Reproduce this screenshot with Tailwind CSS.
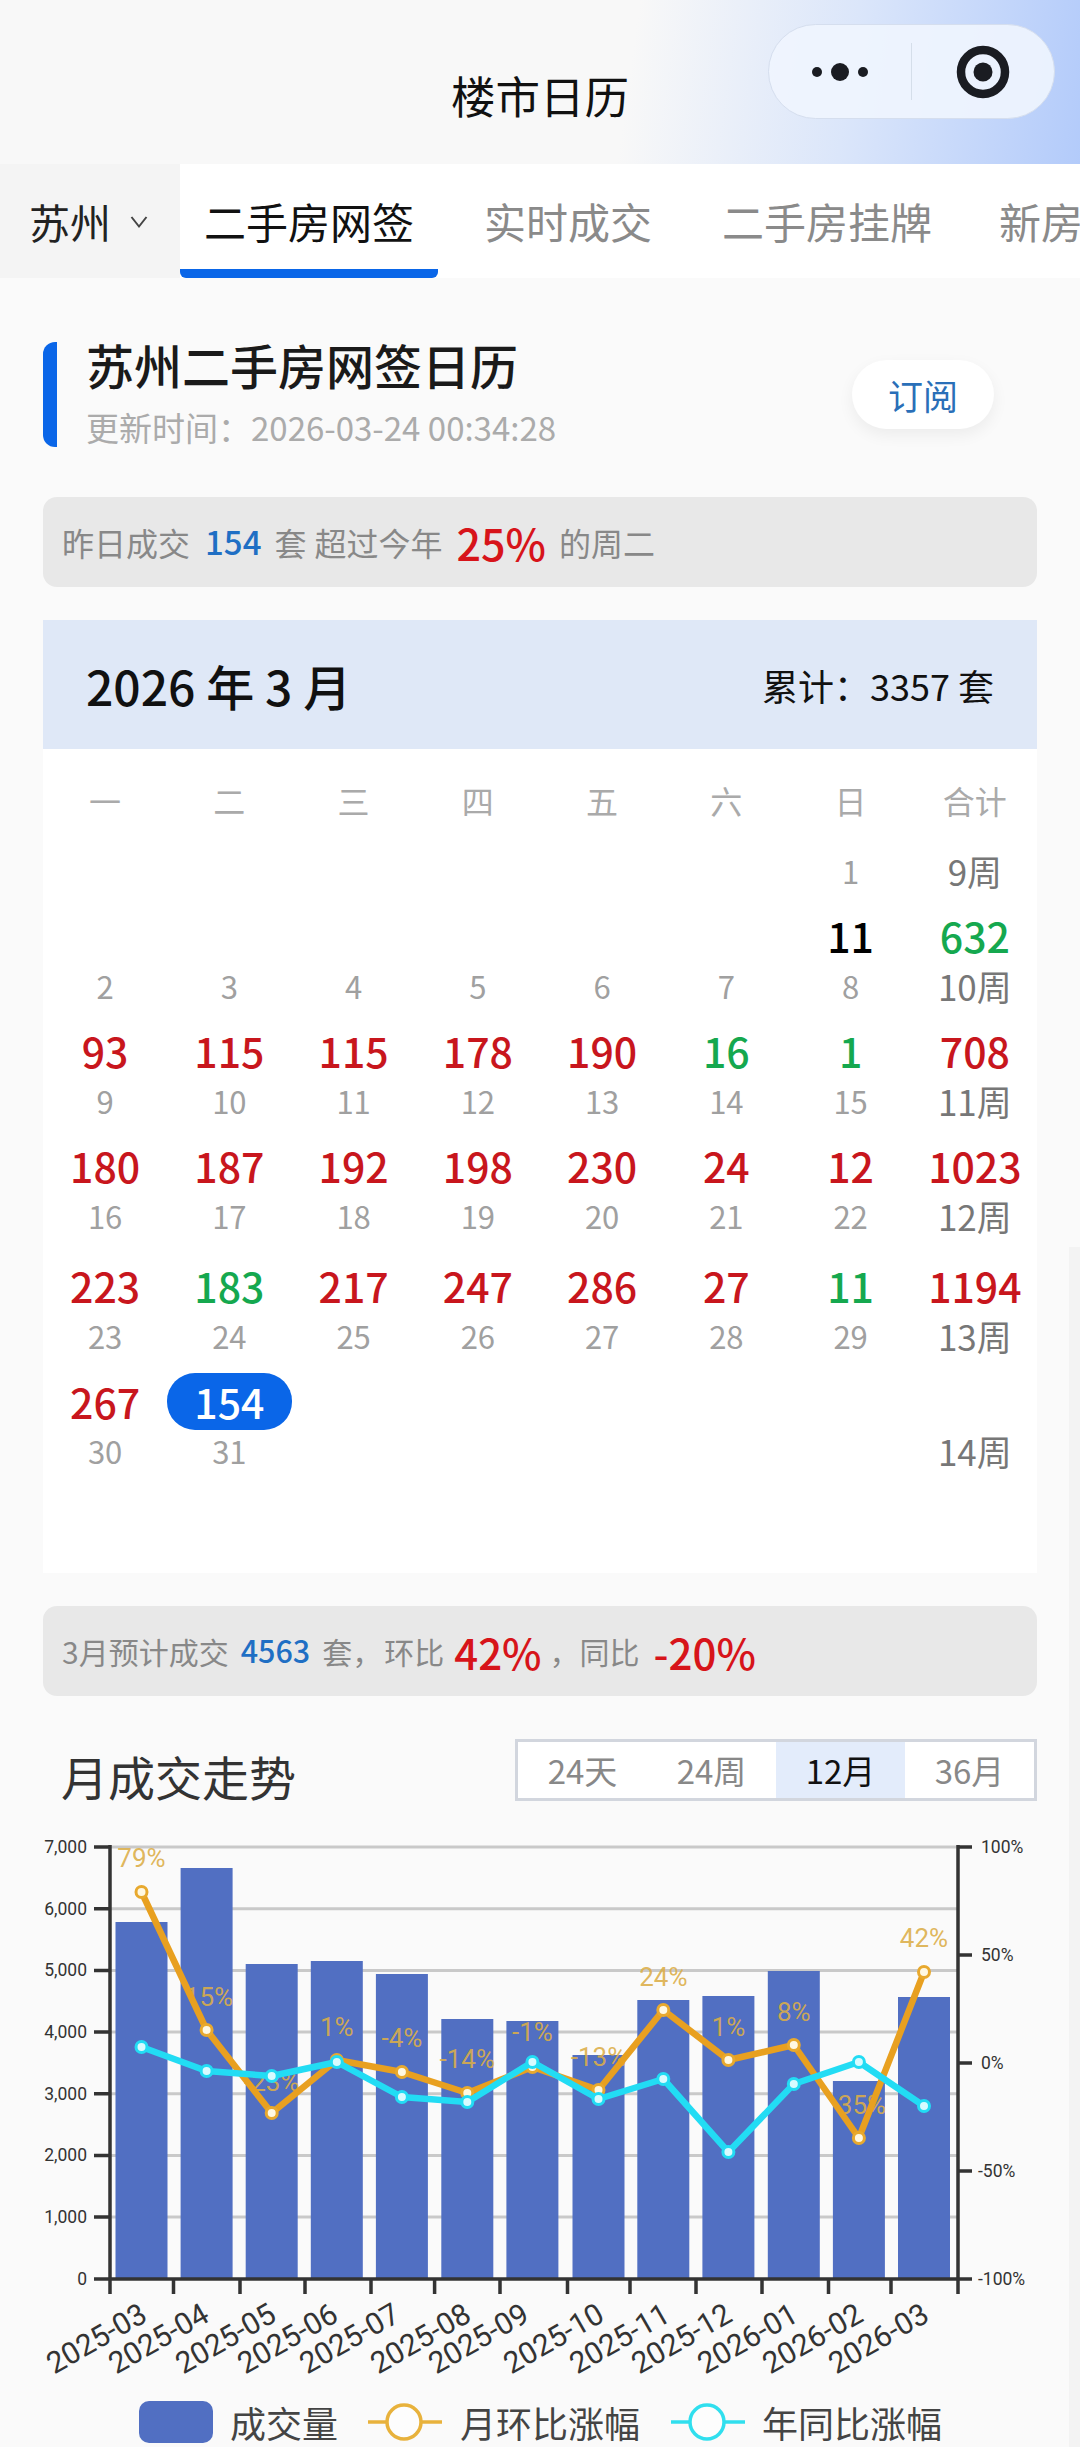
<!DOCTYPE html>
<html lang="zh">
<head>
<meta charset="utf-8">
<title>楼市日历</title>
<script src="https://cdn.jsdelivr.net/npm/@tailwindcss/browser@4"></script>
</head>
<body class="m-0">
<div class="relative w-[1080px] h-[2447px] overflow-hidden bg-[#fafafa] font-['Noto_Sans_CJK_SC','Noto_Sans',sans-serif]">
  <div class="absolute right-0 top-[1247px] bottom-0 w-[11px] bg-[#f3f3f3]"></div>

  <!-- Title bar -->
  <header class="relative h-[164px] bg-[linear-gradient(98deg,#f8f8f8_58%,#dbe6fa_78%,#b3cbfa_100%)]">
    <h1 class="absolute left-0 right-0 top-[68px] text-center text-[44.5px] leading-[54px] font-normal text-[#111]">楼市日历</h1>
    <div class="absolute left-[768px] top-[24px] w-[287px] h-[95px] rounded-full border border-[#d5deee] bg-[#eff5fe]/90 flex items-center">
      <div class="flex-1 flex justify-center">
        <svg width="70" height="24" viewBox="0 0 70 24" fill="#1a1c22"><circle cx="12" cy="12" r="5"/><circle cx="35" cy="12" r="9"/><circle cx="58" cy="12" r="5"/></svg>
      </div>
      <div class="w-px h-[57px] bg-[#d5deea]"></div>
      <div class="flex-1 flex justify-center">
        <svg width="54" height="54" viewBox="0 0 54 54"><circle cx="27" cy="27" r="22" fill="none" stroke="#1a1c22" stroke-width="8.5"/><circle cx="27" cy="27" r="9.5" fill="#1a1c22"/></svg>
      </div>
    </div>
  </header>

  <!-- Tabs -->
  <nav class="flex h-[114px] bg-white text-[42px] leading-[114px] text-[#8a8a8a] whitespace-nowrap overflow-hidden">
    <div class="w-[180px] shrink-0 bg-[#f4f4f4] flex items-center pl-[29px] text-[41px] text-[#222]">
      <span>苏州</span>
      <svg class="ml-[19px] mt-[2px]" width="18" height="14" viewBox="0 0 18 14" fill="none" stroke="#444" stroke-width="2"><path d="M1.5 2 9 11.5 16.5 2"/></svg>
    </div>
    <div class="relative w-[258px] shrink-0 text-center text-[#111]">二手房网签
      <div class="absolute left-0 right-0 bottom-0 h-[9px] rounded-b-[6px] bg-[#0a66e8]"></div>
    </div>
    <div class="ml-[46px]">实时成交</div>
    <div class="ml-[70px]">二手房挂牌</div>
    <div class="ml-[67px]">新房挂牌</div>
  </nav>

  <main class="px-[43px]">
    <!-- Section head -->
    <section class="mt-[64px] h-[105px] flex items-center">
      <div class="w-[14px] h-full rounded-l-[12px] bg-[#0a66e8]"></div>
      <div class="ml-[29px] flex-1 h-full">
        <h2 class="-mt-[2px] text-[48px] leading-[48px] font-medium text-[#1a1a1a]">苏州二手房网签日历</h2>
        <p class="mt-[20px] text-[33px] leading-[38px] text-[#ababab] whitespace-nowrap">更新时间：2026-03-24 00:34:28</p>
      </div>
      <button class="mr-[43px] w-[142px] h-[69px] rounded-full bg-white shadow-[0_6px_16px_rgba(0,0,0,0.06)] text-[35px] leading-[67px] text-[#2a6fb8]">订阅</button>
    </section>

    <!-- Yesterday banner -->
    <section class="mt-[50px] h-[90px] rounded-[14px] bg-[#e8e8e8] pl-[19px] flex items-center text-[32px] text-[#888] whitespace-nowrap">
      <span>昨日成交</span>
      <span class="ml-[15px] text-[33px] font-medium text-[#1f6fc4]">154</span>
      <span class="ml-[13px]">套</span>
      <span class="ml-[8px]">超过今年</span>
      <span class="ml-[14px] text-[43px] font-medium text-[#d7141a]">25%</span>
      <span class="ml-[13px]">的周二</span>
    </section>

    <!-- Calendar -->
    <section class="mt-[33px] h-[953px] bg-white">
      <div class="h-[129px] bg-[#dfe8f7] px-[43px] flex items-center justify-between whitespace-nowrap text-[#111]">
        <div class="text-[48px] font-medium">2026 年 3 月</div>
        <div class="text-[36px]">累计：3357 套</div>
      </div>
      <div class="mt-[26px] grid grid-cols-8 h-[50px] items-center text-center text-[32px] leading-[50px] text-[#aaaaaa]">
        <div>一</div><div>二</div><div>三</div><div>四</div><div>五</div><div>六</div><div>日</div><div>合计</div>
      </div>

      <div class="mt-[21px] grid grid-cols-8 h-[50px] items-center text-center text-[31px] leading-[50px] text-[#a0a0a0]">
        <div></div><div></div><div></div><div></div><div></div><div></div><div>1</div><div class="text-[35px] text-[#777]">9周</div>
      </div>
      <div class="mt-[14px] grid grid-cols-8 h-[50px] items-center text-center text-[41px] leading-[50px] font-medium text-[#c8161d]">
        <div></div><div></div><div></div><div></div><div></div><div></div><div class="text-black">11</div><div class="text-[#15a84f]">632</div>
      </div>

      <div class="mt-[1px] grid grid-cols-8 h-[50px] items-center text-center text-[31px] leading-[50px] text-[#a0a0a0]">
        <div>2</div><div>3</div><div>4</div><div>5</div><div>6</div><div>7</div><div>8</div><div class="text-[35px] text-[#777]">10周</div>
      </div>
      <div class="mt-[14px] grid grid-cols-8 h-[50px] items-center text-center text-[41px] leading-[50px] font-medium text-[#c8161d]">
        <div>93</div><div>115</div><div>115</div><div>178</div><div>190</div><div class="text-[#15a84f]">16</div><div class="text-[#15a84f]">1</div><div>708</div>
      </div>

      <div class="mt-[1px] grid grid-cols-8 h-[50px] items-center text-center text-[31px] leading-[50px] text-[#a0a0a0]">
        <div>9</div><div>10</div><div>11</div><div>12</div><div>13</div><div>14</div><div>15</div><div class="text-[35px] text-[#777]">11周</div>
      </div>
      <div class="mt-[14px] grid grid-cols-8 h-[50px] items-center text-center text-[41px] leading-[50px] font-medium text-[#c8161d]">
        <div>180</div><div>187</div><div>192</div><div>198</div><div>230</div><div>24</div><div>12</div><div>1023</div>
      </div>

      <div class="mt-[1px] grid grid-cols-8 h-[50px] items-center text-center text-[31px] leading-[50px] text-[#a0a0a0]">
        <div>16</div><div>17</div><div>18</div><div>19</div><div>20</div><div>21</div><div>22</div><div class="text-[35px] text-[#777]">12周</div>
      </div>
      <div class="mt-[19px] grid grid-cols-8 h-[50px] items-center text-center text-[41px] leading-[50px] font-medium text-[#c8161d]">
        <div>223</div><div class="text-[#15a84f]">183</div><div>217</div><div>247</div><div>286</div><div>27</div><div class="text-[#15a84f]">11</div><div>1194</div>
      </div>

      <div class="mt-[1px] grid grid-cols-8 h-[50px] items-center text-center text-[31px] leading-[50px] text-[#a0a0a0]">
        <div>23</div><div>24</div><div>25</div><div>26</div><div>27</div><div>28</div><div>29</div><div class="text-[35px] text-[#777]">13周</div>
      </div>
      <div class="mt-[14px] grid grid-cols-8 h-[50px] items-center text-center text-[41px] leading-[50px] font-medium text-[#c8161d]">
        <div>267</div><div class="-my-[4px] mt-[-2px] h-[57px] rounded-[28px] bg-[#0a66e8] text-white leading-[57px]">154</div><div></div><div></div><div></div><div></div><div></div><div></div>
      </div>

      <div class="mt-[1px] grid grid-cols-8 h-[50px] items-center text-center text-[31px] leading-[50px] text-[#a0a0a0]">
        <div>30</div><div>31</div><div></div><div></div><div></div><div></div><div></div><div class="text-[35px] text-[#777]">14周</div>
      </div>
    </section>

    <!-- Forecast banner -->
    <section class="mt-[33px] h-[90px] rounded-[14px] bg-[#e8e8e8] pl-[19px] flex items-center text-[30px] text-[#888] whitespace-nowrap">
      <span>3月预计成交</span>
      <span class="ml-[12px] text-[30.5px] font-medium text-[#1f6fc4]">4563</span>
      <span class="ml-[12px]">套，</span>
      <span class="ml-[2px]">环比</span>
      <span class="ml-[10px] text-[42px] font-medium text-[#d7141a]">42%</span>
      <span class="ml-[8px]">，</span>
      <span>同比</span>
      <span class="ml-[14px] text-[42px] font-medium text-[#d7141a]">-20%</span>
    </section>

    <!-- Trend head -->
    <section class="mt-[43px] h-[62px] flex justify-between">
      <h3 class="ml-[18px] mt-[11px] text-[47px] leading-[52px] font-normal text-[#333]">月成交走势</h3>
      <div class="w-[522px] h-[62px] border-[3px] border-[#d2d6de] bg-white grid grid-cols-4 text-center text-[33px] leading-[56px] text-[#888]">
        <div>24天</div><div>24周</div><div class="bg-[#e3ecfb] text-[#111]">12月</div><div>36月</div>
      </div>
    </section>
  </main>

  <!-- Chart -->
  <svg class="block mt-[19px]" width="1080" height="580" viewBox="0 1820 1080 580" font-family="Roboto, 'Noto Sans', sans-serif">
    <g stroke="#c9c9c9" stroke-width="3">
      <path d="M111 1847H958M111 1908.7H958M111 1970.4H958M111 2032H958M111 2093.8H958M111 2155.5H958M111 2217H958"/>
    </g>
    <g fill="#516fc2">
      <rect x="115.5" y="1922" width="52" height="357"/>
      <rect x="180.6" y="1868" width="52" height="411"/>
      <rect x="245.7" y="1964" width="52" height="315"/>
      <rect x="310.8" y="1961" width="52" height="318"/>
      <rect x="375.9" y="1974" width="52" height="305"/>
      <rect x="441.3" y="2019" width="52" height="260"/>
      <rect x="506.4" y="2021" width="52" height="258"/>
      <rect x="572.5" y="2055" width="52" height="224"/>
      <rect x="637.3" y="2000" width="52" height="279"/>
      <rect x="702.4" y="1996" width="52" height="283"/>
      <rect x="767.8" y="1971" width="52" height="308"/>
      <rect x="832.9" y="2081" width="52" height="198"/>
      <rect x="898" y="1997" width="52" height="282"/>
    </g>
    <g stroke="#333" stroke-width="3.5" fill="none">
      <path d="M110 1845V2294M958 1845V2294"/>
      <path d="M94 1847H110M94 1908.7H110M94 1970.4H110M94 2032H110M94 2093.8H110M94 2155.5H110M94 2217H110"/>
      <path d="M958 1847H972M958 1955H972M958 2063H972M958 2171H972"/>
      <path d="M94 2279H972"/>
      <path d="M173.5 2279V2294M240 2279V2294M305 2279V2294M371 2279V2294M434.6 2279V2294M500 2279V2294M567.5 2279V2294M630 2279V2294M696 2279V2294M762 2279V2294M828.5 2279V2294M891 2279V2294"/>
    </g>
    <g fill="#333" font-size="17.5" text-anchor="end">
      <text x="87" y="1853">7,000</text>
      <text x="87" y="1915">6,000</text>
      <text x="87" y="1976">5,000</text>
      <text x="87" y="2038">4,000</text>
      <text x="87" y="2100">3,000</text>
      <text x="87" y="2161">2,000</text>
      <text x="87" y="2223">1,000</text>
      <text x="87" y="2285">0</text>
    </g>
    <g fill="#333" font-size="17.5">
      <text x="981" y="1853">100%</text>
      <text x="981" y="1961">50%</text>
      <text x="981" y="2069">0%</text>
      <text x="978" y="2177">-50%</text>
      <text x="978" y="2285">-100%</text>
    </g>
    <g fill="#dcae48" fill-opacity="0.9" font-size="26" text-anchor="middle">
      <text x="141.5" y="1867">79%</text>
      <text x="209" y="2006">15%</text>
      <text x="271.7" y="2091">-23%</text>
      <text x="336.8" y="2036">1%</text>
      <text x="401.9" y="2047">-4%</text>
      <text x="467.3" y="2068">-14%</text>
      <text x="532.4" y="2041">-1%</text>
      <text x="598.5" y="2066">-13%</text>
      <text x="663.3" y="1986">24%</text>
      <text x="728.4" y="2036">1%</text>
      <text x="793.8" y="2021">8%</text>
      <text x="862" y="2114">35%</text>
      <text x="924" y="1947">42%</text>
    </g>
    <polyline fill="none" stroke="#e8a020" stroke-width="6.5" stroke-linejoin="round" points="141.5,1892 206.6,2030 271.7,2113 336.8,2060 401.9,2072 467.3,2093 532.4,2067 598.5,2090 663.3,2010 728.4,2060 793.8,2045 858.9,2138 924,1972"/>
    <g fill="#fff8e2" stroke="#e8a92e" stroke-width="3">
      <circle cx="141.5" cy="1892" r="5.5"/><circle cx="206.6" cy="2030" r="5.5"/><circle cx="271.7" cy="2113" r="5.5"/><circle cx="336.8" cy="2060" r="5.5"/><circle cx="401.9" cy="2072" r="5.5"/><circle cx="467.3" cy="2093" r="5.5"/><circle cx="532.4" cy="2067" r="5.5"/><circle cx="598.5" cy="2090" r="5.5"/><circle cx="663.3" cy="2010" r="5.5"/><circle cx="728.4" cy="2060" r="5.5"/><circle cx="793.8" cy="2045" r="5.5"/><circle cx="858.9" cy="2138" r="5.5"/><circle cx="924" cy="1972" r="5.5"/>
    </g>
    <polyline fill="none" stroke="#22dcf4" stroke-width="6.5" stroke-linejoin="round" points="141.5,2047 206.6,2071 271.7,2076 336.8,2062 401.9,2097 467.3,2102 532.4,2062 598.5,2099 663.3,2079 728.4,2152 793.8,2084 858.9,2062 924,2106"/>
    <g fill="#d8fbff" stroke="#22dcf4" stroke-width="3">
      <circle cx="141.5" cy="2047" r="5.5"/><circle cx="206.6" cy="2071" r="5.5"/><circle cx="271.7" cy="2076" r="5.5"/><circle cx="336.8" cy="2062" r="5.5"/><circle cx="401.9" cy="2097" r="5.5"/><circle cx="467.3" cy="2102" r="5.5"/><circle cx="532.4" cy="2062" r="5.5"/><circle cx="598.5" cy="2099" r="5.5"/><circle cx="663.3" cy="2079" r="5.5"/><circle cx="728.4" cy="2152" r="5.5"/><circle cx="793.8" cy="2084" r="5.5"/><circle cx="858.9" cy="2062" r="5.5"/><circle cx="924" cy="2106" r="5.5"/>
    </g>
    <g fill="#333" font-size="30" text-anchor="end">
      <text transform="translate(149 2320) rotate(-30)">2025-03</text>
      <text transform="translate(211 2320) rotate(-30)">2025-04</text>
      <text transform="translate(278 2320) rotate(-30)">2025-05</text>
      <text transform="translate(340 2320) rotate(-30)">2025-06</text>
      <text transform="translate(402 2320) rotate(-30)">2025-07</text>
      <text transform="translate(473 2320) rotate(-30)">2025-08</text>
      <text transform="translate(531 2320) rotate(-30)">2025-09</text>
      <text transform="translate(606 2320) rotate(-30)">2025-10</text>
      <text transform="translate(672 2320) rotate(-30)">2025-11</text>
      <text transform="translate(734 2320) rotate(-30)">2025-12</text>
      <text transform="translate(800 2320) rotate(-30)">2026-01</text>
      <text transform="translate(865 2320) rotate(-30)">2026-02</text>
      <text transform="translate(931 2320) rotate(-30)">2026-03</text>
    </g>
  </svg>

  <!-- Legend -->
  <div class="flex items-center h-[42px] mt-[1px] pl-[139px] text-[36px] leading-[42px] text-[#444] whitespace-nowrap">
    <div class="w-[74px] h-[42px] rounded-[10px] bg-[#516fc2]"></div>
    <span class="ml-[17px]">成交量</span>
    <svg class="ml-[30px]" width="74" height="42" viewBox="0 0 74 42"><path d="M0 21H74" stroke="#e8b23c" stroke-width="3.5"/><circle cx="36" cy="21" r="17" fill="#fdfdfd" stroke="#e8b23c" stroke-width="3.5"/></svg>
    <span class="ml-[18px]">月环比涨幅</span>
    <svg class="ml-[31px]" width="74" height="42" viewBox="0 0 74 42"><path d="M0 21H74" stroke="#30dfee" stroke-width="3.5"/><circle cx="36" cy="21" r="17" fill="#fdfdfd" stroke="#30dfee" stroke-width="3.5"/></svg>
    <span class="ml-[17px]">年同比涨幅</span>
  </div>
</div>
</body>
</html>
